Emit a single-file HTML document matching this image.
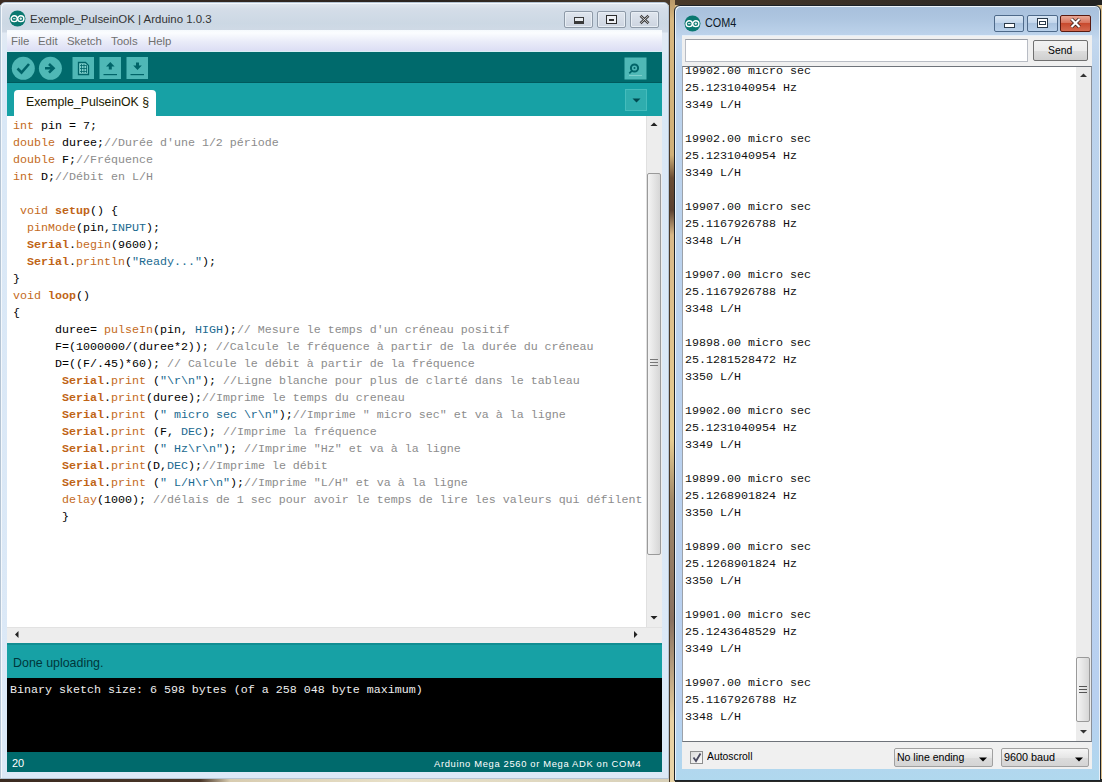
<!DOCTYPE html>
<html><head><meta charset="utf-8">
<style>
*{box-sizing:border-box;margin:0;padding:0}
html,body{width:1102px;height:782px;overflow:hidden;background:#d9bc88;position:relative;font-family:"Liberation Sans",sans-serif}
.abs{position:absolute}
.mono{font-family:"Liberation Mono",monospace;font-size:11.67px;white-space:pre;line-height:17px}
.sx{transform-origin:0 0;white-space:nowrap}
/* Arduino window */
#aw{left:0;top:2px;width:669px;height:777px;background:linear-gradient(#e2e8ef 0,#d4dde8 6px,#ccd8e4 20px,#d0dae6 29px,#e2eaf4 30px,#dae8f6 60px,#dce9f7 100%);border:1px solid #b4c4d4;border-radius:5px 5px 0 0;box-shadow:inset 1px 1px 0 #f4f8fc}
#title{left:30px;top:13px;font-size:11.45px;color:#333}
.wbtn{top:11px;height:17px;border:1px solid #8e9aa8;border-radius:2px;background:linear-gradient(#e0e6ee,#ccd4e0);box-shadow:inset 0 0 0 1px #e8eef4}
#menubar{left:7px;top:30px;width:655px;height:22px;background:linear-gradient(#f6fafd 0,#fbfdff 3px,#e8eaf8 60%,#dcdef4 100%);border-bottom:1px solid #c0c8d8}
.menu{top:35px;font-size:11.4px;color:#707070}
#toolbar{left:7px;top:52px;width:655px;height:31px;background:#006a6c}
#tabbar{left:7px;top:83px;width:655px;height:33px;background:#17a1a5}
#tab{left:14px;top:90px;width:142px;height:26px;background:#fff;border-radius:4px 4px 0 0}
#editor{left:7px;top:116px;width:639px;height:511px;background:#fff}
#vscroll{left:646px;top:116px;width:16px;height:511px;background:#ededed;border-left:1px solid #e0e0e0}
#hscroll{left:7px;top:627px;width:655px;height:16px;background:#ededed;border-top:1px solid #e2e2e2}
#status{left:7px;top:643px;width:655px;height:35px;background:#17a1a5;border-top:2px solid #118e92}
#console{left:7px;top:678px;width:655px;height:74px;background:#000}
#linestatus{left:7px;top:752px;width:655px;height:20px;background:#006a6c}
.kw{color:#c46a22}
.kb{color:#bf6416;font-weight:bold}
.lit{color:#1a6a90}
.cm{color:#8c8c8c}
.thumb{border:1px solid #9a9a9a;border-radius:2px;background:linear-gradient(90deg,#f4f4f4,#e2e2e2 60%,#d6d6d6)}
/* COM4 */
#cw{left:674px;top:5px;width:427px;height:776px;background:linear-gradient(#a8c0dc 0,#adc5e0 12px,#bcd2ea 28px,#c4d8ee 34px,#bcd3ec 60px,#b8d0f0 700px,#b0d8ee 100%);border:1px solid #1c2228;border-radius:6px 6px 0 0;box-shadow:inset 1px 1px 0 #eef4fa,inset -1px 0 0 #e8f0f8}
#ctitle{left:705px;top:14.5px;font-size:13.2px;color:#0d1a28;transform:scaleX(0.82);transform-origin:0 0}
#cclient{left:682px;top:35px;width:410px;height:734px;background:#f0f0f0;border-top:1px solid #e4eef8}
#field{left:685px;top:39px;width:343px;height:23px;background:#fff;border:1px solid #b8bcc4;border-top-color:#9a9ea6}
#send{left:1033px;top:40px;width:55px;height:21px;border:1px solid #707070;border-radius:2px;background:linear-gradient(#f2f2f2 0,#ebebeb 50%,#dddddd 51%,#cfcfcf 100%)}
#sendt{left:1048px;top:44px;font-size:11.5px;color:#000;transform:scaleX(0.9);transform-origin:0 0}
#textarea{left:682px;top:66px;width:410px;height:676px;background:#fff;border-top:1px solid #6e737a;border-left:1px solid #9ca2aa;border-bottom:1px solid #6e737a;border-right:1px solid #8a8f98}
#cscroll{left:1076px;top:67px;width:15px;height:674px;background:#ececec}
.ctext{left:685px;color:#111}
.dd{top:748px;height:19px;border:1px solid #a0a0a0;border-radius:2px;background:linear-gradient(#f6f6f6,#e6e6e6 50%,#dcdcdc 51%,#d4d4d4)}
</style></head><body>

<!-- desktop strips -->
<div class="abs" style="left:0;top:0;width:1102px;height:5px;background:linear-gradient(90deg,#3a2a22,#2a2420 40%,#4a3a2a 60%,#222 100%)"></div>
<div class="abs" style="left:0;top:779px;width:1102px;height:3px;background:linear-gradient(90deg,#3a2a20 0,#4a3628 200px,#d8ccb0 230px,#e8e0c8 400px,#d8d0b8 669px,#2a2a28 675px)"></div>

<!-- Arduino window -->
<div id="aw" class="abs"></div>
<svg class="abs" style="left:9px;top:10px" width="17" height="17" viewBox="0 0 17 17"><circle cx="8.5" cy="8.5" r="8" fill="#0a7870"/><ellipse cx="5.2" cy="8.7" rx="3.1" ry="2.9" fill="none" stroke="#fff" stroke-width="1.4"/><ellipse cx="11.8" cy="8.7" rx="3.1" ry="2.9" fill="none" stroke="#fff" stroke-width="1.4"/><path d="M3.9 8.7H6.5M10.5 8.7H13.1M11.8 7.4V10" stroke="#fff" stroke-width="0.9"/></svg>
<div id="title" class="abs">Exemple_PulseinOK | Arduino 1.0.3</div>
<div class="abs wbtn" style="left:564px;width:29px"></div>
<div class="abs" style="left:574px;top:17px;width:10px;height:7px;border:1.5px solid #3a3a3a;border-top-width:1px;background:#e8ecf0"></div>
<div class="abs" style="left:575px;top:21px;width:8px;height:2px;background:#3a3a3a"></div>
<div class="abs wbtn" style="left:597px;width:29px"></div>
<div class="abs" style="left:606px;top:15px;width:11px;height:9px;border:1.5px solid #2e2e2e;background:#eef0f4"></div>
<div class="abs" style="left:609px;top:19px;width:5px;height:1.5px;background:#2e2e2e"></div>
<div class="abs wbtn" style="left:630px;width:29px"></div>
<svg class="abs" style="left:638px;top:14px" width="13" height="11"><path d="M2.5 1.8 L10.5 9.2 M10.5 1.8 L2.5 9.2" stroke="#3a3a3a" stroke-width="2.6"/><path d="M2.5 1.8 L10.5 9.2 M10.5 1.8 L2.5 9.2" stroke="#f0f0f0" stroke-width="0.8"/></svg>
<div id="menubar" class="abs"></div>
<div class="abs menu" style="left:11px">File</div>
<div class="abs menu" style="left:38px">Edit</div>
<div class="abs menu" style="left:67px">Sketch</div>
<div class="abs menu" style="left:111px">Tools</div>
<div class="abs menu" style="left:148px">Help</div>
<div id="toolbar" class="abs"></div>
<div id="tabbar" class="abs"></div>
<div id="tab" class="abs"></div>
<svg class="abs" style="left:7px;top:51px" width="655" height="33">
<rect x="0" y="0" width="655" height="1" fill="#d8eef4"/>
<rect x="0" y="31" width="655" height="1" fill="#005a5d"/>
<circle cx="16.3" cy="17.3" r="11.5" fill="#4fb8b6"/>
<path d="M10.5 17.5 L14.5 21.5 L22 13" fill="none" stroke="#006468" stroke-width="2.6"/>
<circle cx="43.4" cy="17.3" r="11.5" fill="#4fb8b6"/>
<path d="M38 17.3 H45 M42 13 L46.5 17.3 L42 21.6" fill="none" stroke="#006468" stroke-width="2.6"/>
<rect x="65.5" y="6" width="21.5" height="22" fill="#4fb8b6"/>
<path d="M71.5 11.5 H78.5 L81.5 14.5 V23.5 H71.5 Z" fill="#7fd0cc" stroke="#006468" stroke-width="1.3"/>
<path d="M73 14.5 H80 M73 17.5 H80 M73 20.5 H80 M74.5 13 V22 M77 13 V22 M79.5 15 V22" stroke="#006468" stroke-width="0.8"/>
<rect x="92.5" y="6" width="21.5" height="22" fill="#4fb8b6"/>
<path d="M103.3 11 L99 15.5 H101.8 V18.5 H104.8 V15.5 H107.6 Z" fill="#006468"/>
<rect x="96.5" y="23" width="13.5" height="1.2" fill="#006468"/>
<rect x="119.5" y="6" width="21.5" height="22" fill="#4fb8b6"/>
<path d="M130.5 19 L126.2 14.5 H129 V11.5 H132 V14.5 H134.8 Z" fill="#006468"/>
<rect x="123.5" y="23" width="13.5" height="1.2" fill="#006468"/>
<rect x="617.5" y="6.5" width="22" height="22" fill="#4fb8b6"/>
<circle cx="627.5" cy="17" r="3.6" fill="none" stroke="#006468" stroke-width="2"/>
<circle cx="627.5" cy="17" r="1" fill="#006468"/>
<path d="M624.8 19.8 L622.3 22.3" stroke="#006468" stroke-width="1.8"/>
<path d="M622 24.5 H635" stroke="#7fcfcc" stroke-width="1"/>
</svg>
<svg class="abs" style="left:625px;top:89px" width="22" height="22"><rect x="0.5" y="0.5" width="21" height="21" fill="#2fadae" stroke="#45bcbc" stroke-width="1"/><path d="M7.5 9.5 H15.5 L11.5 13.5 Z" fill="#004a50"/></svg>


<div class="abs" style="left:26px;top:95px;font-size:12.3px;color:#1a1a00">Exemple_PulseinOK §</div>
<div id="editor" class="abs"></div>
<div id="vscroll" class="abs"></div>
<svg class="abs" style="left:646px;top:116px" width="16" height="511">
<path d="M4.5 10 L8 6.5 L11.5 10 Z" fill="#222"/>
<path d="M4.5 500 L8 503.5 L11.5 500 Z" fill="#222"/>
</svg>
<div class="abs thumb" style="left:647px;top:173px;width:14px;height:382px"></div>
<svg class="abs" style="left:650px;top:358px" width="8" height="9"><path d="M0 1.5H8M0 4.5H8M0 7.5H8" stroke="#777" stroke-width="1.2"/></svg>
<div id="hscroll" class="abs"></div>
<svg class="abs" style="left:7px;top:627px" width="655" height="16">
<path d="M8 7.5 L11.5 4 L11.5 11 Z" fill="#222"/>
<path d="M627 4 L630.5 7.5 L627 11 Z" fill="#222"/>
</svg>
<div id="status" class="abs"></div>
<div class="abs sx" style="left:13px;top:655px;font-size:13.5px;color:#00363a;transform:scaleX(0.92)">Done uploading.</div>
<div id="console" class="abs"></div>
<div class="abs mono" style="left:10px;top:682px;color:#eeeeee">Binary sketch size: 6 598 bytes (of a 258 048 byte maximum)</div>
<div id="linestatus" class="abs"></div>
<div class="abs" style="left:12px;top:757px;font-size:11px;color:#fff">20</div>
<div class="abs" style="left:434px;top:758px;font-size:9.4px;letter-spacing:0.66px;color:#fff;white-space:nowrap">Arduino Mega 2560 or Mega ADK on COM4</div>

<div class="abs mono" style="left:13px;top:118px;color:#000"><span class="kw">int</span> pin = 7;
<span class="kw">double</span> duree;<span class="cm">//Durée d'une 1/2 période</span>
<span class="kw">double</span> F;<span class="cm">//Fréquence</span>
<span class="kw">int</span> D;<span class="cm">//Débit en L/H</span>

 <span class="kw">void</span> <span class="kb">setup</span>() {
  <span class="kw">pinMode</span>(pin,<span class="lit">INPUT</span>);
  <span class="kb">Serial</span>.<span class="kw">begin</span>(9600);
  <span class="kb">Serial</span>.<span class="kw">println</span>(<span class="lit">"Ready..."</span>);
}
<span class="kw">void</span> <span class="kb">loop</span>()
{
      duree= <span class="kw">pulseIn</span>(pin, <span class="lit">HIGH</span>);<span class="cm">// Mesure le temps d'un créneau positif</span>
      F=(1000000/(duree*2)); <span class="cm">//Calcule le fréquence à partir de la durée du créneau</span>
      D=((F/.45)*60); <span class="cm">// Calcule le débit à partir de la fréquence</span>
       <span class="kb">Serial</span>.<span class="kw">print</span> (<span class="lit">"\r\n"</span>); <span class="cm">//Ligne blanche pour plus de clarté dans le tableau</span>
       <span class="kb">Serial</span>.<span class="kw">print</span>(duree);<span class="cm">//Imprime le temps du creneau</span>
       <span class="kb">Serial</span>.<span class="kw">print</span> (<span class="lit">" micro sec \r\n"</span>);<span class="cm">//Imprime " micro sec" et va à la ligne</span>
       <span class="kb">Serial</span>.<span class="kw">print</span> (F, <span class="lit">DEC</span>); <span class="cm">//Imprime la fréquence</span>
       <span class="kb">Serial</span>.<span class="kw">print</span> (<span class="lit">" Hz\r\n"</span>); <span class="cm">//Imprime "Hz" et va à la ligne</span>
       <span class="kb">Serial</span>.<span class="kw">print</span>(D,<span class="lit">DEC</span>);<span class="cm">//Imprime le débit</span>
       <span class="kb">Serial</span>.<span class="kw">print</span> (<span class="lit">" L/H\r\n"</span>);<span class="cm">//Imprime "L/H" et va à la ligne</span>
       <span class="kw">delay</span>(1000); <span class="cm">//délais de 1 sec pour avoir le temps de lire les valeurs qui défilent</span>
       }</div>

<!-- gap lines -->
<div class="abs" style="left:669px;top:0;width:6px;height:782px;background:linear-gradient(#b89868 0,#d8b880 20px,#d0b078 155px,#6a4c34 178px,#5a4030 210px,#d8b888 235px,#e6cc90 440px,#a08868 500px,#887060 620px,#b8a080 670px,#e8d0a0 720px,#e8d4a8 782px)"></div>
<div class="abs" style="left:669px;top:0;width:1px;height:782px;background:#4a3a2a"></div>

<!-- COM4 window -->
<div id="cw" class="abs"></div>
<svg class="abs" style="left:684px;top:15px" width="17" height="17" viewBox="0 0 17 17"><circle cx="8.5" cy="8.5" r="8" fill="#0a7870"/><ellipse cx="5.2" cy="8.7" rx="3.1" ry="2.9" fill="none" stroke="#fff" stroke-width="1.4"/><ellipse cx="11.8" cy="8.7" rx="3.1" ry="2.9" fill="none" stroke="#fff" stroke-width="1.4"/><path d="M3.9 8.7H6.5M10.5 8.7H13.1M11.8 7.4V10" stroke="#fff" stroke-width="0.9"/></svg>
<div id="ctitle" class="abs">COM4</div>
<div class="abs" style="left:994px;top:15px;width:30px;height:17px;border:1px solid #4e6a8a;border-radius:2px;background:linear-gradient(#d8e6f4,#c3d6ec 45%,#aac3df 50%,#b8d0ea)"></div>
<div class="abs" style="left:1004px;top:23px;width:11px;height:5px;background:#fff;border:1px solid #2a3a4a"></div>
<div class="abs" style="left:1027px;top:15px;width:31px;height:17px;border:1px solid #4e6a8a;border-radius:2px;background:linear-gradient(#d8e6f4,#c3d6ec 45%,#aac3df 50%,#b8d0ea)"></div>
<div class="abs" style="left:1037px;top:18px;width:11px;height:10px;background:#fff;border:1px solid #2a3a4a"></div>
<div class="abs" style="left:1039px;top:21px;width:7px;height:4px;border:1px solid #2a3a4a;background:#fff"></div>
<div class="abs" style="left:1060px;top:15px;width:31px;height:17px;border:1px solid #5a1a10;border-radius:2px;background:linear-gradient(#eaa896,#d8755e 45%,#c84a2e 50%,#d46a50)"></div>
<svg class="abs" style="left:1069px;top:17px" width="13" height="12"><path d="M2.5 2 L10.5 10 M10.5 2 L2.5 10" stroke="#2a1510" stroke-width="3.6"/><path d="M2.5 2 L10.5 10 M10.5 2 L2.5 10" stroke="#fff" stroke-width="2.2"/></svg>
<div id="cclient" class="abs"></div>
<div id="field" class="abs"></div>
<div id="send" class="abs"></div>
<div id="sendt" class="abs">Send</div>
<div id="textarea" class="abs"></div>
<div id="cscroll" class="abs"></div>
<svg class="abs" style="left:1076px;top:67px" width="15" height="674">
<path d="M4 10 L7.5 6.5 L11 10 Z" fill="#333"/>
<path d="M4 663 L7.5 666.5 L11 663 Z" fill="#333"/>
</svg>
<div class="abs thumb" style="left:1076px;top:657px;width:14px;height:65px"></div>
<svg class="abs" style="left:1079px;top:685px" width="8" height="9"><path d="M0 1.5H8M0 4.5H8M0 7.5H8" stroke="#555" stroke-width="1.2"/></svg>
<div class="abs" style="left:683px;top:67px;width:393px;height:674px;overflow:hidden"><div class="abs mono ctext" style="left:2px;top:-4px">19902.00 micro sec
25.1231040954 Hz
3349 L/H

19902.00 micro sec
25.1231040954 Hz
3349 L/H

19907.00 micro sec
25.1167926788 Hz
3348 L/H

19907.00 micro sec
25.1167926788 Hz
3348 L/H

19898.00 micro sec
25.1281528472 Hz
3350 L/H

19902.00 micro sec
25.1231040954 Hz
3349 L/H

19899.00 micro sec
25.1268901824 Hz
3350 L/H

19899.00 micro sec
25.1268901824 Hz
3350 L/H

19901.00 micro sec
25.1243648529 Hz
3349 L/H

19907.00 micro sec
25.1167926788 Hz
3348 L/H</div></div>
<!-- bottom panel -->
<div class="abs" style="left:690px;top:751px;width:13px;height:13px;border:1px solid #8e8f8f;background:linear-gradient(135deg,#dcdcdc,#fbfbfb)"></div>
<svg class="abs" style="left:692px;top:752px" width="10" height="11"><path d="M1.5 5.5 L4 9 L8.5 1.5" fill="none" stroke="#4a4a60" stroke-width="1.8"/></svg>
<div class="abs sx" style="left:707px;top:750px;font-size:11.5px;color:#000;transform:scaleX(0.9)">Autoscroll</div>
<div class="abs dd" style="left:894px;width:99px"></div>
<div class="abs sx" style="left:897px;top:751px;font-size:11.5px;color:#000;transform:scaleX(0.915)">No line ending</div>
<svg class="abs" style="left:978px;top:757px" width="10" height="6"><path d="M1 0.5 H9 L5 4.5 Z" fill="#000"/></svg>
<div class="abs dd" style="left:1001px;width:88px"></div>
<div class="abs sx" style="left:1004px;top:751px;font-size:11.5px;color:#000;transform:scaleX(0.94)">9600 baud</div>
<svg class="abs" style="left:1074px;top:757px" width="10" height="6"><path d="M1 0.5 H9 L5 4.5 Z" fill="#000"/></svg>
</body></html>
